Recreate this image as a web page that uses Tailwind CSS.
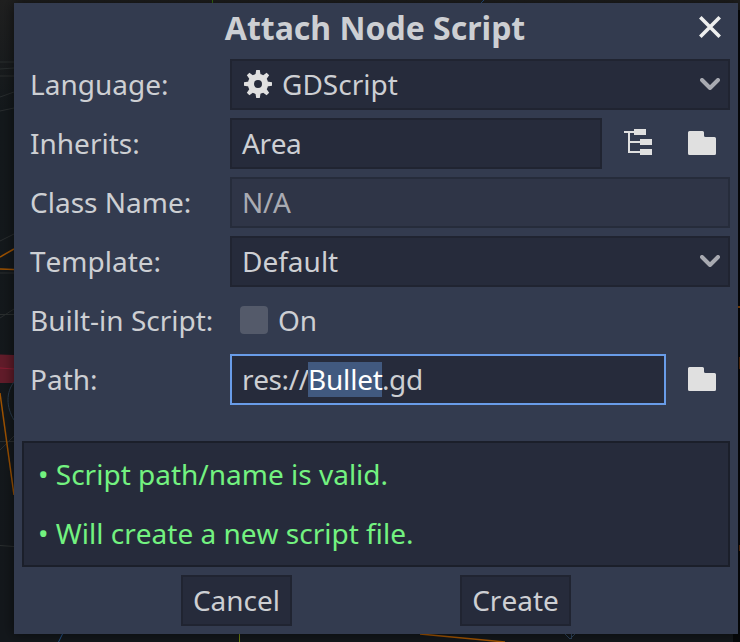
<!DOCTYPE html>
<html lang="en">
<head>
<meta charset="utf-8">
<title>Attach Node Script</title>
<script src="https://cdn.jsdelivr.net/npm/@tailwindcss/browser@4"></script>
</head>
<body class="relative w-[740px] h-[642px] overflow-hidden bg-[#14181c] font-['Noto_Sans',sans-serif] text-[28px] leading-[38px] text-[#cdcfd3] whitespace-nowrap [font-kerning:none]">
<!-- 3D viewport behind the dialog -->
<svg class="absolute inset-0" width="740" height="642" viewBox="0 0 740 642" fill="none">
  <defs>
    <linearGradient id="sky" x1="0" y1="0" x2="0" y2="1"><stop offset="0" stop-color="#202020"/><stop offset=".17" stop-color="#14191c"/><stop offset="1" stop-color="#14181c"/></linearGradient>
  </defs>
  <rect width="740" height="642" fill="url(#sky)"/>
  <rect x="733" y="10" width="7" height="632" fill="#07090b"/>
  <path d="M0 62h14M0 69l14-1M0 76h14M0 97l14-5M0 111l14-3M0 241l14-7M0 273h14M0 318l14-9M0 314.500h14M0 441.500h14M0 450l14-14M0 545.500l14 1" stroke="#2a2e2f"/>
  <path d="M0 257l14-8M0 269l14 .5" stroke="#a05300" stroke-width="1.500"/>
  <path d="M0 354.500l14 .5v28H0z" fill="#621c2a"/>
  <path d="M0 368l14 1" stroke="#8d1d34"/>
  <path d="M14 382c-8 10-8 25 0 38" stroke="#2a3d50"/>
  <path d="M0 393l14 102" stroke="#a05300" stroke-width="1.500"/>
  <path d="M212.500 0v3" stroke="#3a7510"/>
  <path d="M484 0l-3 3M62.500 634l-4 8" stroke="#24548e"/>
  <path d="M239.500 634v8" stroke="#70860f"/>
  <path d="M420 634l85 8" stroke="#a85700" stroke-width="1.500"/>
  <path d="M565 634l5 5 5-5M571.500 634v5" stroke="#2f465f"/>
  <path d="M738 307h2" stroke="#8f4800" stroke-width="2"/>
  <path d="M739.500 357v12M739.500 545v6" stroke="#5c2d0a"/>
</svg>

<main class="relative ml-[14px] mt-[3px] w-[724px] h-[631px] bg-[#333b4f] shadow-[0_0_12px_1px_rgba(0,0,0,0.5)] flex flex-col pl-2 pr-2">
  <header class="relative h-14 shrink-0 flex justify-center pt-[6px]">
    <h1 class="font-bold text-[32px] leading-[38px] -ml-[2px]">Attach Node Script</h1>
    <button class="absolute right-[9px] top-[13px]" aria-label="Close">
      <svg width="22" height="22" viewBox="0 0 22 22" fill="none" stroke="#eeefef" stroke-width="3.600"><path d="M1.300 1.300l19.400 19.400M20.700 1.300L1.300 20.700"/></svg>
    </button>
  </header>

  <section class="grid grid-cols-[200px_500px] auto-rows-[51px] gap-y-2 items-center pl-2">
    <label class="pb-px">Language:</label>
    <div class="h-full flex items-center justify-between bg-[#262b3b] border-2 border-[#202431] pl-3 pr-2 pb-px">
      <div class="flex items-center gap-[10px]">
        <svg width="28" height="28" viewBox="0 0 28 28">
          <g fill="#e0e0e0">
            <path id="tooth" d="M12.200 0h3.600l.8 5h-5.200zM12.200 28h3.600l.8-5h-5.200zM0 12.200v3.600l5 .8v-5.200zM28 12.200v3.600l-5 .8v-5.200z"/>
            <use href="#tooth" transform="rotate(45 14 14)"/>
          </g>
          <circle cx="14" cy="14" r="7.100" fill="none" stroke="#e0e0e0" stroke-width="6.200"/>
        </svg>
        <span>GDScript</span>
      </div>
      <svg width="20" height="12" viewBox="0 0 20 12" fill="none" stroke="#a8aab1" stroke-width="4" stroke-linecap="round" stroke-linejoin="round"><path d="M2 2l8 8 8-8"/></svg>
    </div>

    <label class="pb-px">Inherits:</label>
    <div class="h-full flex">
      <div class="w-[372px] h-full flex items-center bg-[#262b3b] border-2 border-[#202431] pl-[10px] pb-px tracking-[-0.4px]">Area</div>
      <svg class="ml-[22px] mt-[11px]" width="28" height="26" viewBox="0 0 28 26" fill="#e0e0e0"><path d="M0 2h10V0h12v6H10V4H6v8h10v-2h12v6H16v-2H6v8h10v-2h12v6H16v-2H4V4H0z"/></svg>
      <svg class="ml-9 mt-[13px]" width="28" height="24" viewBox="0 0 28 24" fill="#e0e0e0"><path d="M1.500 0h13q1.500 0 1.500 1.500v3q0 1.500 1.500 1.500h9q1.500 0 1.500 1.500v15q0 1.500-1.500 1.500h-25q-1.500 0-1.500-1.500v-21q0-1.500 1.500-1.500z"/></svg>
    </div>

    <label class="pb-px">Class Name:</label>
    <div class="h-full flex items-center bg-[#2f3547] border-2 border-[#262c3b] pl-[10px] pb-px text-[#a9abb3] tracking-[-0.4px]">N/A</div>

    <label class="pb-px">Template:</label>
    <div class="h-full flex items-center justify-between bg-[#262b3b] border-2 border-[#202431] pl-[10px] pr-2 pb-px">
      <span>Default</span>
      <svg width="20" height="12" viewBox="0 0 20 12" fill="none" stroke="#a8aab1" stroke-width="4" stroke-linecap="round" stroke-linejoin="round"><path d="M2 2l8 8 8-8"/></svg>
    </div>

    <label class="pb-px">Built-in Script:</label>
    <div class="flex items-center gap-[10px] pl-[10px] pb-px">
      <span class="size-7 rounded bg-[#545a6a]"></span>
      <span>On</span>
    </div>

    <label class="pb-px">Path:</label>
    <div class="h-full flex">
      <div class="w-[436px] h-full flex items-center bg-[#262b3b] border-2 border-[#699ce8] pl-[10px] pb-px tracking-[-0.4px]"><span class="w-[66px]">res://</span><span class="w-[74px] h-[35px] leading-[34px] self-start mt-[6px] bg-[#41597f] text-white tracking-[-0.2px]">Bullet</span><span>.gd</span></div>
      <svg class="ml-[22px] mt-[13px]" width="28" height="24" viewBox="0 0 28 24" fill="#e0e0e0"><path d="M1.500 0h13q1.500 0 1.500 1.500v3q0 1.500 1.500 1.500h9q1.500 0 1.500 1.500v15q0 1.500-1.500 1.500h-25q-1.500 0-1.500-1.500v-21q0-1.500 1.500-1.500z"/></svg>
    </div>
  </section>

  <section class="mt-9 h-[126px] shrink-0 bg-[#262b3b] border-2 border-[#1b1f2a] pl-[14px] pt-3 flex flex-col gap-[21px] text-[#73f280]">
    <p>• Script path/name is valid.</p>
    <p>• Will create a new script file.</p>
  </section>

  <footer class="mt-2 h-[51px] shrink-0 flex pl-[159px] gap-[168px]">
    <button class="w-[111px] bg-[#262b3b] border-2 border-[#202431] pb-px">Cancel</button>
    <button class="w-[111px] bg-[#262b3b] border-2 border-[#202431] pb-px">Create</button>
  </footer>
</main>
</body>
</html>
